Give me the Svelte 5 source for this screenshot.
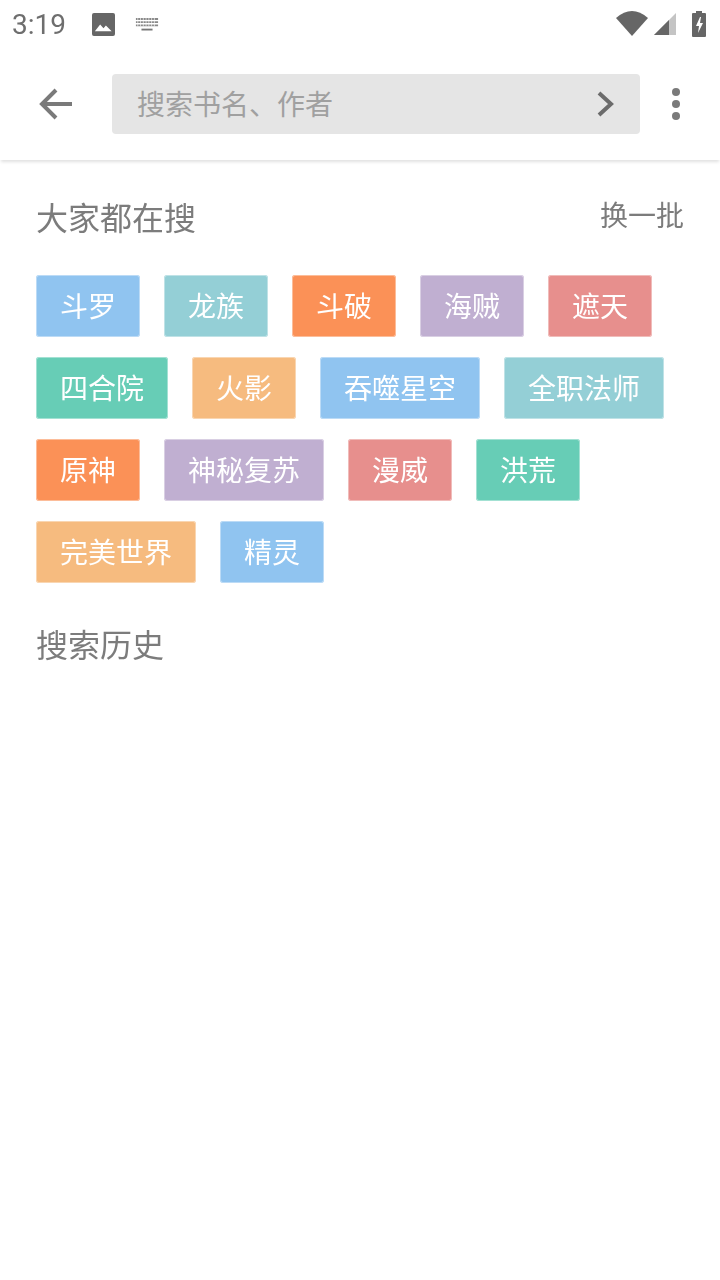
<script>
    const hot = [
        ['斗罗', 'blue'], ['龙族', 'teal'], ['斗破', 'orange'], ['海贼', 'purple'], ['遮天', 'red'],
        ['四合院', 'green'], ['火影', 'peach'], ['吞噬星空', 'blue'], ['全职法师', 'teal'],
        ['原神', 'orange'], ['神秘复苏', 'purple'], ['漫威', 'red'], ['洪荒', 'green'],
        ['完美世界', 'peach'], ['精灵', 'blue']
    ]
</script>

<div class="page">
    <div class="status">
        <span class="time">3:19</span>
        <svg class="ic-image" width="23" height="23" viewBox="0 0 24 24">
            <path d="M2 0h20a2 2 0 0 1 2 2v20a2 2 0 0 1-2 2H2a2 2 0 0 1-2-2V2a2 2 0 0 1 2-2z" fill="#666"/>
            <path d="M3 19l5.500-7 3.500 4 2.500-3 6 6z" fill="#fff"/>
        </svg>
        <svg class="ic-keys" width="24" height="15" viewBox="0 0 26 16">
            <path d="M1 1h24v2H1zM1 4.500h24v2H1zM1 8h24v2H1z" fill="#888"/>
            <path d="M3 1v9M6 1v9M9 1v9M12 1v9M15 1v9M18 1v9M21 1v9" stroke="#fff" stroke-width="1" opacity=".7"/>
            <path d="M7 12.500h12v2H7z" fill="#777"/>
        </svg>
        <span class="grow"></span>
        <svg class="ic-wifi" width="32" height="25" viewBox="0 0 32 25"><path d="M0 7Q16-7 32 7L16 25z" fill="#666"/></svg>
        <svg class="ic-signal" width="22" height="22" viewBox="0 0 22 22">
            <path d="M22 0v22H0z" fill="#c4c4c4"/>
            <path d="M15 7V22H0z" fill="#666"/>
        </svg>
        <svg class="ic-batt" width="14" height="26" viewBox="0 0 14 26">
            <path d="M4 0h6v2h3a1 1 0 0 1 1 1v22a1 1 0 0 1-1 1H1a1 1 0 0 1-1-1V3a1 1 0 0 1 1-1h3z" fill="#666"/>
            <path d="M8 6L4 15h3l-1 7 5-10H8l1-6z" fill="#fff"/>
        </svg>
    </div>

    <header>
        <button class="back" aria-label="back">
            <svg width="36" height="36" viewBox="0 0 36 36">
                <path d="M34 18H5M18 4L4 18l14 14" fill="none" stroke="#7a7a7a" stroke-width="4"/>
            </svg>
        </button>
        <div class="search">
            <span>搜索书名、作者</span>
            <svg width="20" height="26" viewBox="0 0 20 26">
                <path d="M3 2l12 11L3 24" fill="none" stroke="#6b6b6b" stroke-width="4"/>
            </svg>
        </div>
        <div class="more"><i></i><i></i><i></i></div>
    </header>

    <main>
        <div class="head">
            <h2>大家都在搜</h2>
            <span class="swap">换一批</span>
        </div>
        <div class="tags">
            {#each hot as [name, tone]}
                <span class="tag {tone}">{name}</span>
            {/each}
        </div>
        <h2 class="history">搜索历史</h2>
    </main>
</div>

<style>
:global(body) {
    background: #fff;
}
.page {
    width: 720px;
    height: 1280px;
    overflow: hidden;
    font-family: "Noto Sans CJK SC", Roboto, sans-serif;
    will-change: opacity;
}
.status {
    height: 48px;
    display: flex;
    align-items: center;
    padding: 0 14px 0 12px;
    box-sizing: border-box;
}
.time {
    font-family: Roboto, sans-serif;
    font-size: 28px;
    color: #6e6e6e;
    width: 80px;
}
.ic-keys {
    margin-left: 20px;
}
.ic-wifi {
    margin-top: -1px;
}
.ic-signal {
    margin-left: 6px;
}
.ic-batt {
    margin-left: 16px;
    margin-top: -1px;
}
.grow {
    flex: 1;
}
header {
    height: 112px;
    display: flex;
    align-items: center;
    box-shadow: 0 3px 3px -1px rgba(0, 0, 0, 0.12);
    box-sizing: border-box;
}
.back {
    width: 112px;
    height: 112px;
    padding: 0;
    border: 0;
    background: none;
    display: flex;
    align-items: center;
    justify-content: center;
}
.search {
    width: 528px;
    height: 60px;
    padding: 0 24px 2px 25px;
    box-sizing: border-box;
    background: #e5e5e5;
    border-radius: 4px;
    display: flex;
    align-items: center;
    justify-content: space-between;
    font-size: 28px;
    color: #a0a0a0;
}
.search svg {
    margin-top: 2px;
}
.more {
    flex: 1;
    display: flex;
    flex-direction: column;
    align-items: center;
    gap: 4px;
    padding-right: 8px;
}
.more i {
    width: 8px;
    height: 8px;
    border-radius: 50%;
    background: #7a7a7a;
}
main {
    padding: 0 36px;
}
.head {
    display: flex;
    justify-content: space-between;
    padding-top: 32px;
}
h2 {
    margin: 0;
    font-size: 32px;
    font-weight: 400;
    line-height: 48px;
    color: #7c7c7c;
}
.swap {
    font-size: 28px;
    line-height: 44px;
    color: #7c7c7c;
}
.tags {
    display: flex;
    flex-wrap: wrap;
    gap: 20px 24px;
    margin-top: 35px;
}
.tag {
    height: 62px;
    line-height: 60px;
    padding: 0 24px;
    font-size: 28px;
    color: #fff;
    border-radius: 3px;
    outline: 1px solid rgba(255, 255, 255, 0.4);
    outline-offset: -1px;
}
.blue { background: #90c4f0; }
.teal { background: #94cfd6; }
.orange { background: #fb9157; }
.purple { background: #c0afd1; }
.red { background: #e78f8d; }
.green { background: #67cdb6; }
.peach { background: #f6bb7f; }
.history {
    margin-top: 36px;
}
</style>
